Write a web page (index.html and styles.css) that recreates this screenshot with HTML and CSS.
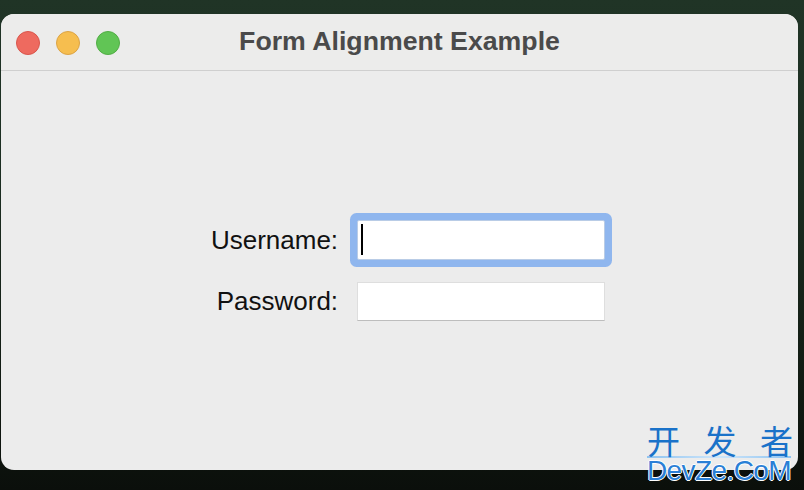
FILE: index.html
```html
<!DOCTYPE html>
<html>
<head>
<meta charset="utf-8">
<link rel="stylesheet" href="styles.css">
</head>
<body>
<div class="desk">
  <div class="window">
    <div class="titlebar">
      <div class="lights">
        <span class="light red"></span>
        <span class="light yellow"></span>
        <span class="light green"></span>
      </div>
      <div class="title">Form Alignment Example</div>
    </div>
    <div class="content">
      <div class="form">
        <label class="label">Username:</label>
        <div class="field focus"><span class="caret"></span></div>
        <label class="label">Password:</label>
        <div class="field"></div>
      </div>
    </div>
  </div>
  <div class="watermark">
    <div class="wm-cn"><span>开</span><span>发</span><span>者</span></div>
    <div class="wm-line"></div>
    <div class="wm-en">DevZe.CoM</div>
  </div>
</div>
</body>
</html>
```

FILE: styles.css
```css
* { box-sizing: border-box; }
html, body { margin: 0; padding: 0; }
body {
  width: 804px;
  height: 490px;
  overflow: hidden;
  background: linear-gradient(to bottom, #203426 0%, #1b2c20 40%, #111a12 80%, #0b0f0b 100%);
  font-family: "Liberation Sans", Arial, sans-serif;
}
.desk {
  position: relative;
  width: 804px;
  height: 490px;
  padding-top: 14px;
  padding-left: 1px;
}
.window {
  width: 797px;
  height: 456px;
  background: #ececec;
  border-radius: 13px;
  overflow: hidden;
  display: flex;
  flex-direction: column;
}
.titlebar {
  height: 57px;
  flex: none;
  display: flex;
  align-items: center;
  border-bottom: 1px solid #cfcfcf;
  background: #ececeb;
}
.lights {
  display: flex;
  gap: 16px;
  padding-left: 15px;
  padding-top: 1px;
  flex: none;
  width: 119px;
}
.light {
  width: 24px;
  height: 24px;
  border-radius: 50%;
  display: block;
  flex: none;
}
.red { background: #ee6a5f; border: 1px solid #d9564c; }
.yellow { background: #f6be4f; border: 1px solid #dca445; }
.green { background: #61c555; border: 1px solid #52ad45; }
.title {
  flex: 1;
  text-align: center;
  font-weight: bold;
  font-size: 26.7px;
  color: #4a4a4a;
  margin-left: -119px;
  padding-bottom: 1px;
}
.content {
  flex: 1;
  display: flex;
  align-items: center;
  justify-content: center;
  padding-left: 17px;
  padding-bottom: 1px;
}
.form {
  display: grid;
  grid-template-columns: auto 248px;
  column-gap: 19px;
  row-gap: 22px;
  align-items: center;
}
.label {
  font-size: 26px;
  color: #111;
  text-align: right;
  line-height: 30px;
}
.field {
  height: 40px;
  background: #fff;
  border: 1px solid #dedede;
  border-bottom: 1px solid #bdbdbd;
  display: flex;
  align-items: center;
}
.field + .label + .field { height: 39px; }
.field.focus {
  border-radius: 2px;
  border-color: #b9cce6;
  box-shadow: 0 0 0 7px #8fb6ee;
}
.caret {
  display: block;
  width: 2px;
  height: 31px;
  background: #000;
  margin-left: 3px;
}
.watermark {
  position: absolute;
  left: 647px;
  top: 425px;
  width: 146px;
}
.wm-cn {
  display: flex;
  justify-content: space-between;
  font-family: "Noto Sans CJK SC", sans-serif;
  font-size: 33px;
  line-height: 31px;
  height: 31px;
  color: #1a72c9;
}
.wm-line {
  height: 2px;
  width: 144px;
  background: linear-gradient(to right, #8ec3f0, #cfe6fa, #8ec3f0);
}
.wm-en {
  font-family: "Liberation Sans", Arial, sans-serif;
  font-size: 28px;
  line-height: 24px;
  height: 24px;
  margin-top: 1px;
  color: #2a7fd6;
  letter-spacing: -0.6px;
  white-space: nowrap;
  text-shadow: 1px 0 0 #fff, -1px 0 0 #fff, 0 1px 0 #fff, 0 -1px 0 #fff;
}
```
